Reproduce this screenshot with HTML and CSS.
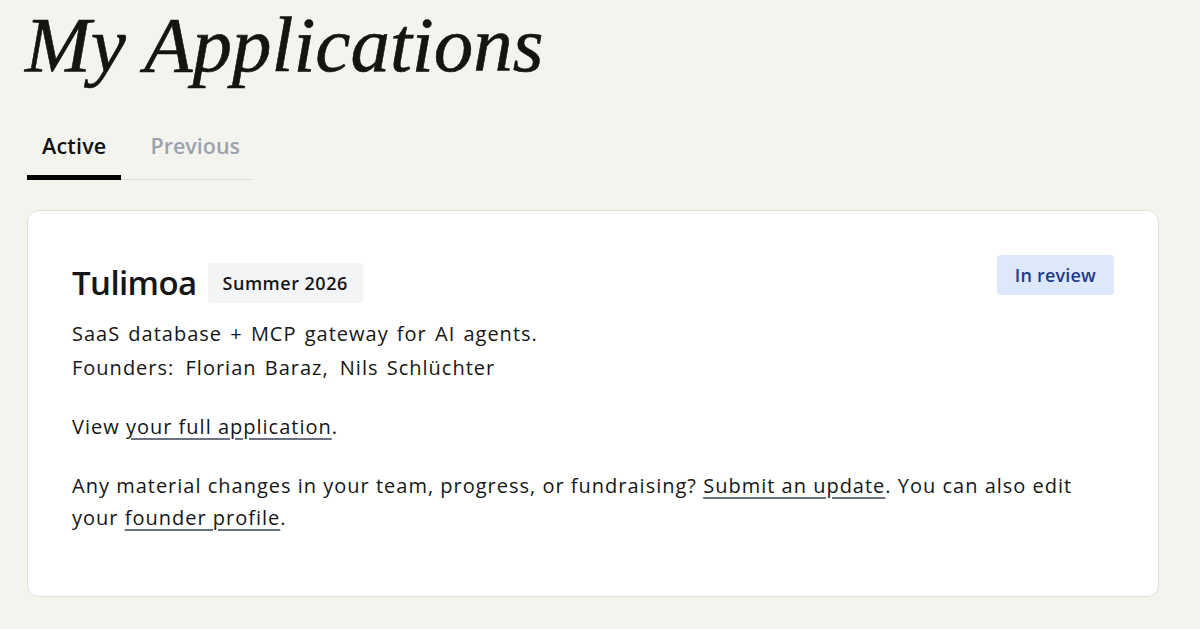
FILE: index.html
```html
<!DOCTYPE html>
<html lang="en">
<head>
<meta charset="utf-8">
<title>My Applications</title>
<link rel="stylesheet" href="styles.css">
</head>
<body>
<main class="page">
  <h1 class="page-title">My Applications</h1>
  <nav class="tabs">
    <a class="tab tab-active">Active</a>
    <a class="tab">Previous</a>
  </nav>
  <section class="card">
    <div class="card-head">
      <div class="title-row">
        <h2 class="company">Tulimoa</h2>
        <span class="batch">Summer 2026</span>
      </div>
      <span class="status">In review</span>
    </div>
    <p class="desc">SaaS database + MCP gateway for AI agents.</p>
    <p class="founders">Founders: <span class="founder">Florian Baraz,</span> <span class="founder">Nils Schlüchter</span></p>
    <p class="para">View <a class="link">your full application</a>.</p>
    <p class="para">Any material changes in your team, progress, or fundraising? <a class="link">Submit an update</a>. You can also edit your <a class="link">founder profile</a>.</p>
  </section>
</main>
</body>
</html>
```
FILE: styles.css
```css
html, body {
  margin: 0;
  padding: 0;
  background: #f4f4ef;
}
body {
  font-family: "Open Sans", "Noto Sans", sans-serif;
  color: #161616;
}
.page {
  padding: 0 41px 0 27px;
}
.page-title {
  margin: 0 0 0 -2px;
  font-family: "Liberation Serif", serif;
  font-style: italic;
  font-weight: 400;
  font-size: 79px;
  line-height: 90px;
  color: #141410;
  -webkit-text-stroke: 0.6px #141410;
}
.tabs {
  display: flex;
  width: 226px;
  margin-top: 41px;
  border-bottom: 1px solid #dcdcd8;
}
.tab {
  display: block;
  padding: 0 15px 15px 15px;
  font-size: 21.5px;
  font-weight: 600;
  letter-spacing: 0.2px;
  color: #9ca3af;
  margin-bottom: -1px;
  border-bottom: 5px solid transparent;
}
.tab-active {
  color: #111;
  border-bottom-color: #000;
}
.tab + .tab {
  padding-left: 29px;
  letter-spacing: 0;
}
.card {
  margin-top: 30px;
  background: #fff;
  border: 1px solid #e2e2dd;
  border-radius: 12px;
  padding: 44px 44px 62px 44px;
}
.card-head {
  display: flex;
  justify-content: space-between;
  align-items: flex-start;
}
.title-row {
  display: flex;
  align-items: center;
  gap: 11px;
  margin-top: 8px;
}
.company {
  margin: 0;
  font-size: 33px;
  font-weight: 600;
  line-height: 40px;
  letter-spacing: -0.6px;
}
.batch {
  background: #f3f4f6;
  border-radius: 3px;
  padding: 0 15px;
  line-height: 40px;
  font-size: 18px;
  font-weight: 600;
  letter-spacing: 0.5px;
}
.status {
  background: #dde8fb;
  color: #1e3a8a;
  border-radius: 4px;
  padding: 0 18px;
  line-height: 40px;
  font-size: 18px;
  font-weight: 600;
  letter-spacing: 0.2px;
}
.desc, .founders {
  margin: 0;
  font-size: 20px;
  line-height: 34px;
  letter-spacing: 1px;
  word-spacing: 2px;
}
.desc {
  margin-top: 14px;
}
.founder {
  margin-left: 3px;
}
.para {
  margin: 26px 0 0 0;
  max-width: 1010px;
  font-size: 20px;
  line-height: 32px;
  letter-spacing: 1px;
}
.para + .para {
  margin-top: 27px;
}
.link {
  color: inherit;
  text-decoration: underline;
  text-decoration-color: #6b7280;
  text-decoration-thickness: 2px;
  text-underline-offset: 4px;
}
```
